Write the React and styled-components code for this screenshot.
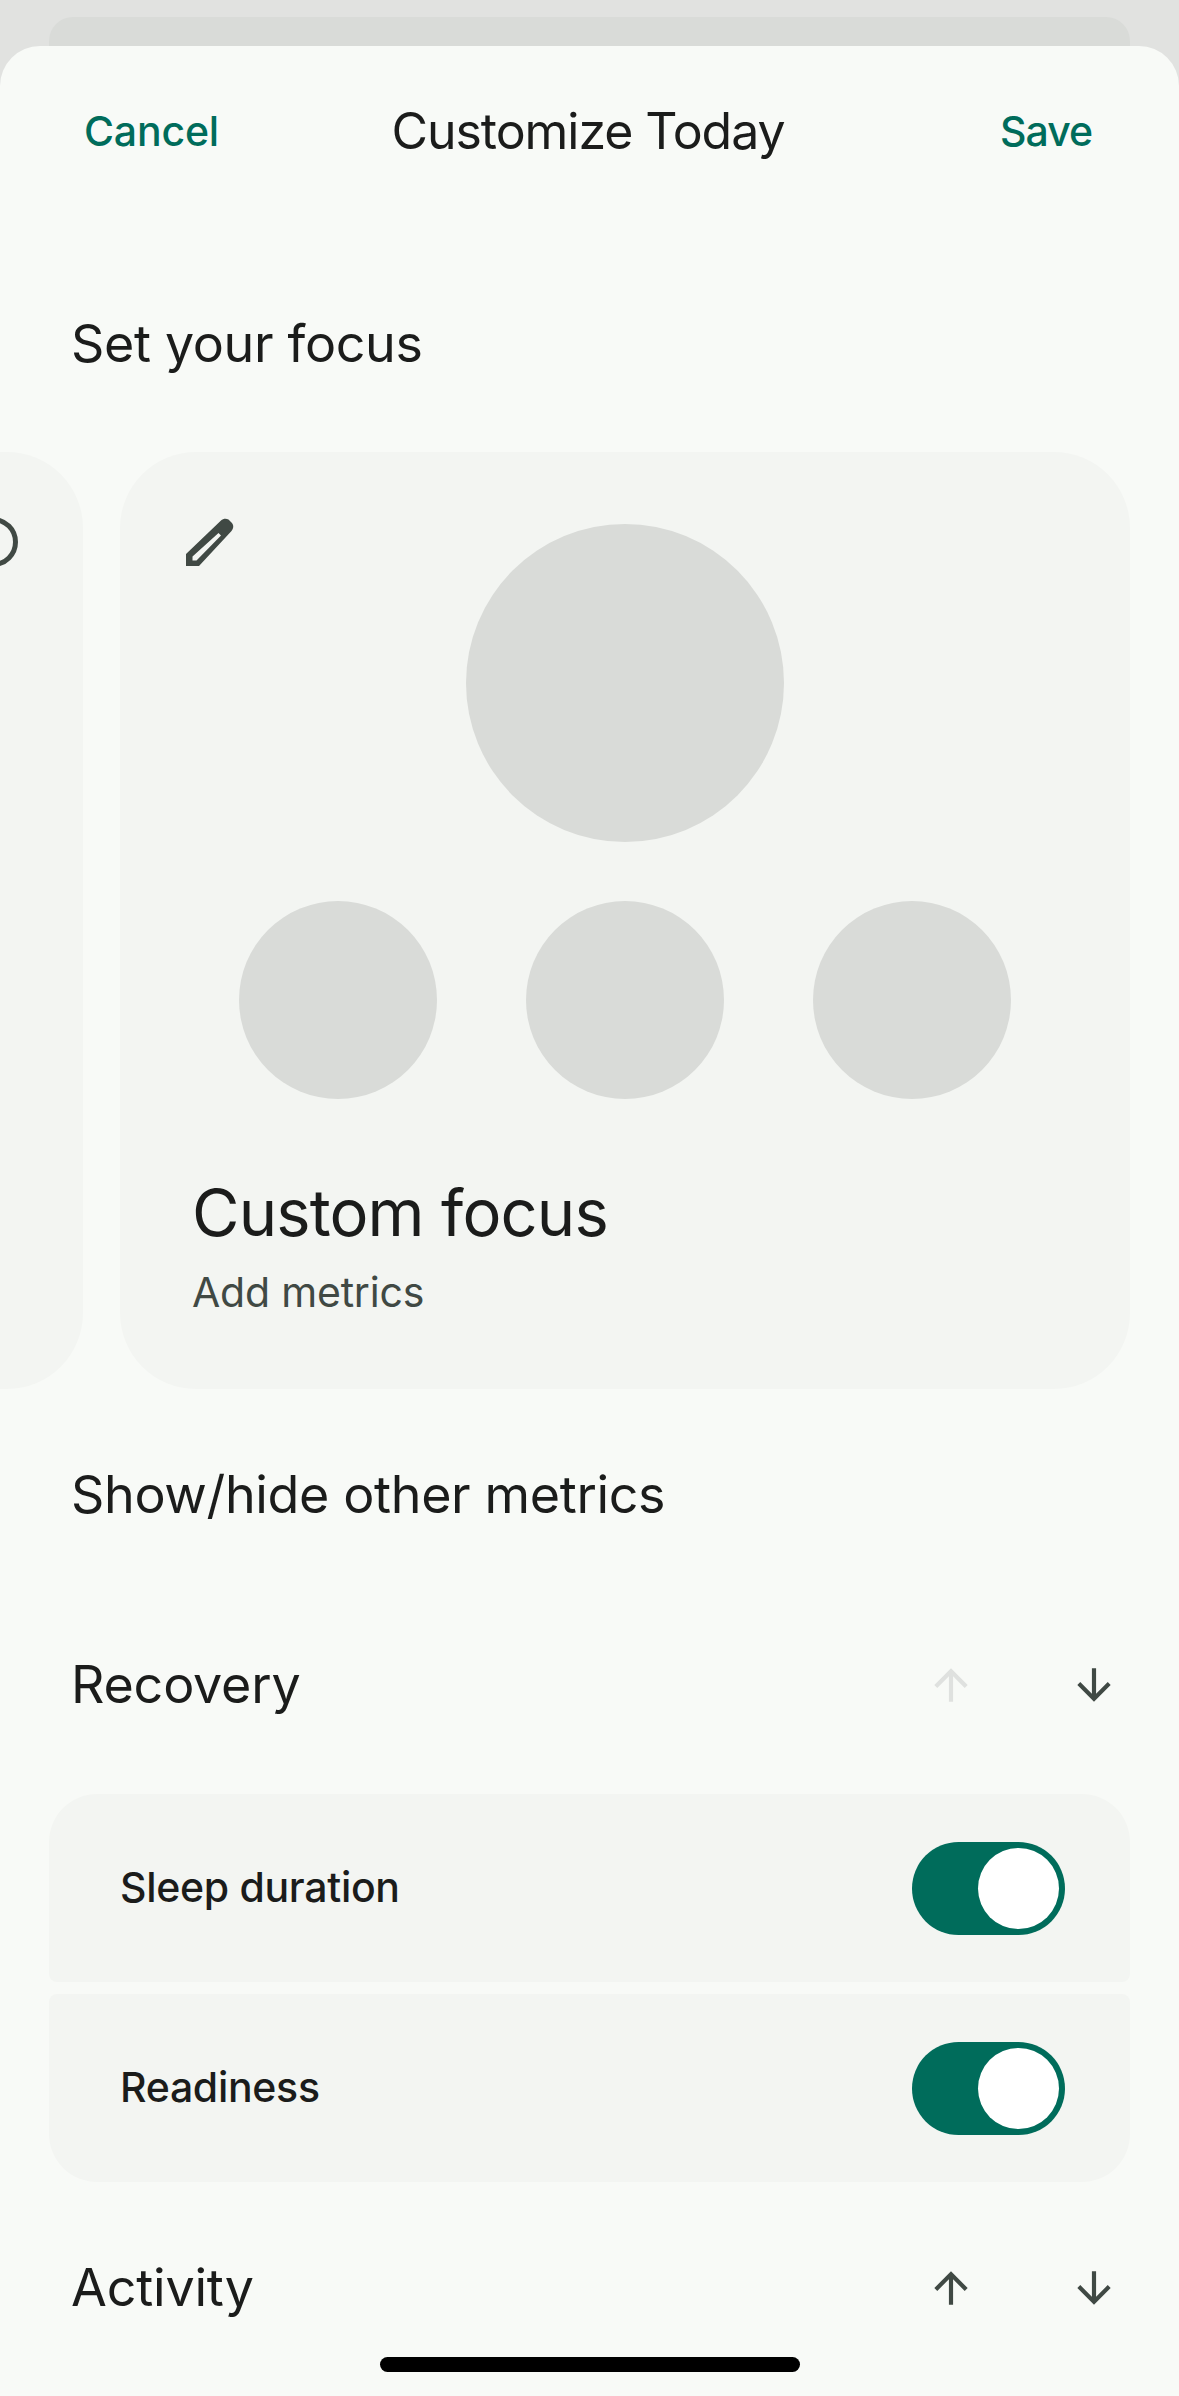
import styled, { createGlobalStyle } from "styled-components";

const GlobalStyle = createGlobalStyle`
  html, body {
    margin: 0;
    padding: 0;
    background: #e1e2e0;
  }
  * { box-sizing: border-box; }
`;

const fontStack = `Inter, Roboto, "Noto Sans", Arial, sans-serif`;

const Screen = styled.div`
  position: relative;
  width: 1179px;
  height: 2396px;
  padding-top: 17px;
  overflow: hidden;
  background: #e1e2e0;
  font-family: ${fontStack};
  color: #1b1c1b;
`;

const BehindCard = styled.div`
  height: 29px;
  margin: 0 49px;
  background: #d9dbd8;
  border-radius: 24px 24px 0 0;
`;

const Sheet = styled.div`
  height: 2350px;
  padding-top: 55px;
  background: #f8faf7;
  border-radius: 40px 40px 0 0;
`;

const Header = styled.header`
  display: grid;
  grid-template-columns: 1fr auto 1fr;
  align-items: center;
  height: 60px;
  padding: 0 87px 0 84px;
`;

const TextAction = styled.span`
  justify-self: ${({ $end }) => ($end ? "end" : "start")};
  font-size: 41px;
  font-weight: 500;
  line-height: 60px;
  letter-spacing: ${({ $end }) => ($end ? "-1px" : "-0.2px")};
  color: #006c5b;
`;

const Title = styled.h1`
  margin: 0;
  font-size: 50px;
  font-weight: 400;
  line-height: 60px;
  letter-spacing: -1.05px;
`;

const SectionTitle = styled.h2`
  margin: ${({ $top }) => $top}px 0 0;
  padding-left: 71px;
  font-size: 52px;
  font-weight: 400;
  line-height: 62px;
  letter-spacing: -0.35px;
`;

const Carousel = styled.div`
  display: flex;
  gap: 37px;
  width: 1179px;
  margin-top: 77px;
  overflow: hidden;
`;

const FocusCard = styled.div`
  position: relative;
  flex: none;
  width: 1010px;
  height: 937px;
  background: #f3f5f2;
  border-radius: 76px;
`;

const PreviousCard = styled(FocusCard)`
  margin-left: -927px;
`;

const IconSlot = styled.div`
  position: absolute;
  top: ${({ $top }) => $top}px;
  left: ${({ $left }) => $left}px;
  line-height: 0;
`;

const CardBody = styled.div`
  padding-top: 72px;
`;

const BigMetric = styled.div`
  width: 318px;
  height: 318px;
  margin: 0 auto;
  border-radius: 50%;
  background: #d9dbd8;
`;

const SmallMetrics = styled.div`
  display: flex;
  justify-content: center;
  gap: 89px;
  margin-top: 59px;
`;

const SmallMetric = styled.div`
  width: 198px;
  height: 198px;
  border-radius: 50%;
  background: #d9dbd8;
`;

const FocusName = styled.div`
  margin-top: 74px;
  padding-left: 72px;
  font-size: 65px;
  line-height: 80px;
  letter-spacing: -0.85px;
`;

const FocusHint = styled.div`
  margin-top: 11px;
  padding-left: 72px;
  font-size: 41px;
  line-height: 56px;
  letter-spacing: -0.2px;
  color: #404944;
`;

const GroupHeader = styled.div`
  display: flex;
  align-items: center;
  height: 60px;
  margin-top: ${({ $top }) => $top}px;
  padding: 0 60px 0 71px;
`;

const GroupName = styled.h3`
  flex: 1;
  margin: 0;
  font-size: 52px;
  font-weight: 400;
  line-height: 62px;
  letter-spacing: -0.2px;
`;

const Arrows = styled.div`
  display: flex;
  gap: 93px;
`;

const ArrowSvg = styled.svg`
  display: block;
  width: 50px;
  height: 50px;
  fill: ${({ $disabled }) => ($disabled ? "#dfe1df" : "#404944")};
`;

const Rows = styled.div`
  display: flex;
  flex-direction: column;
  gap: 12px;
  margin: 79px 49px 0;
`;

const Row = styled.div`
  display: flex;
  align-items: center;
  justify-content: space-between;
  height: 188px;
  padding: 0 65px 0 71px;
  background: #f3f5f2;
  border-radius: ${({ $last }) => ($last ? "8px 8px 48px 48px" : "48px 48px 8px 8px")};
`;

const RowLabel = styled.span`
  padding-bottom: 2px;
  font-size: 41px;
  font-weight: 500;
  line-height: 56px;
  letter-spacing: -0.3px;
`;

const Toggle = styled.div`
  display: flex;
  justify-content: flex-end;
  align-items: center;
  width: 153px;
  height: 93px;
  padding-right: 6px;
  border-radius: 47px;
  background: #006c5b;
`;

const Thumb = styled.div`
  width: 81px;
  height: 81px;
  border-radius: 50%;
  background: #fff;
`;

const HomeBar = styled.div`
  position: absolute;
  left: 380px;
  top: 2357px;
  width: 420px;
  height: 15px;
  border-radius: 8px;
  background: #000;
`;

const ArrowUp = ({ disabled }) => (
  <ArrowSvg viewBox="0 0 24 24" $disabled={disabled}>
    <path d="M4 12l1.41 1.41L11 7.83V20h2V7.83l5.58 5.59L20 12l-8-8-8 8z" />
  </ArrowSvg>
);

const ArrowDown = () => (
  <ArrowSvg viewBox="0 0 24 24">
    <path d="M20 12l-1.41-1.41L13 16.17V4h-2v12.17l-5.58-5.59L4 12l8 8 8-8z" />
  </ArrowSvg>
);

// solid head, hollow body
const Pencil = () => (
  <svg width="48" height="48" viewBox="0 0 48 48" fill="#404944" fillRule="evenodd">
    <path d="M0 48V36L35 2.5C37 .5 40 0 42.5 1.5L46 5C48 7.5 47.5 10.5 45.5 13L13 48ZM6.5 38.5L32.5 15L35 17.5L10.5 42.5H6.5Z" />
  </svg>
);

const Ring = () => (
  <svg width="50" height="50" viewBox="0 0 50 50" fill="none" stroke="#404944" strokeWidth="5">
    <circle cx="25" cy="25" r="22.5" />
  </svg>
);

const MetricRow = ({ label, last }) => (
  <Row $last={last}>
    <RowLabel>{label}</RowLabel>
    <Toggle>
      <Thumb />
    </Toggle>
  </Row>
);

export default function App() {
  return (
    <Screen>
      <GlobalStyle />
      <BehindCard />
      <Sheet>
        <Header>
          <TextAction>Cancel</TextAction>
          <Title>Customize Today</Title>
          <TextAction $end>Save</TextAction>
        </Header>

        <SectionTitle $top={152}>Set your focus</SectionTitle>

        <Carousel>
          <PreviousCard>
            <IconSlot $top={65} $left={895}>
              <Ring />
            </IconSlot>
          </PreviousCard>
          <FocusCard>
            <IconSlot $top={66} $left={66}>
              <Pencil />
            </IconSlot>
            <CardBody>
              <BigMetric />
              <SmallMetrics>
                <SmallMetric />
                <SmallMetric />
                <SmallMetric />
              </SmallMetrics>
              <FocusName>Custom focus</FocusName>
              <FocusHint>Add metrics</FocusHint>
            </CardBody>
          </FocusCard>
        </Carousel>

        <SectionTitle $top={75}>Show/hide other metrics</SectionTitle>

        <GroupHeader $top={129}>
          <GroupName>Recovery</GroupName>
          <Arrows>
            <ArrowUp disabled />
            <ArrowDown />
          </Arrows>
        </GroupHeader>

        <Rows>
          <MetricRow label="Sleep duration" />
          <MetricRow label="Readiness" last />
        </Rows>

        <GroupHeader $top={76}>
          <GroupName>Activity</GroupName>
          <Arrows>
            <ArrowUp />
            <ArrowDown />
          </Arrows>
        </GroupHeader>
      </Sheet>
      <HomeBar />
    </Screen>
  );
}
